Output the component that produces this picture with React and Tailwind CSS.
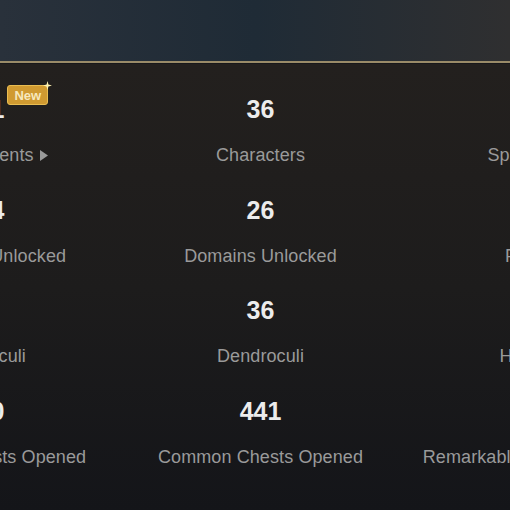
import React from 'react';

const rows = [
  [
    { value: '561', label: 'Achievements', isNew: true, arrow: true },
    { value: '36', label: 'Characters' },
    { value: '12-3', label: 'Spiral Abyss' },
  ],
  [
    { value: '254', label: 'Waypoints Unlocked' },
    { value: '26', label: 'Domains Unlocked' },
    { value: '52', label: 'Pyroculi' },
  ],
  [
    { value: '66', label: 'Anemoculi' },
    { value: '36', label: 'Dendroculi' },
    { value: '48', label: 'Hydroculi' },
  ],
  [
    { value: '120', label: 'Exquisite Chests Opened' },
    { value: '441', label: 'Common Chests Opened' },
    { value: '31', label: 'Remarkable Chests Opened' },
  ],
];

const NewBadge = () => (
  <div className="absolute left-[calc(100%+3px)] -top-[9px]">
    <div className="h-[20px] w-[41px] rounded-[3px] border border-[#e9bd52] bg-[#d09a31] flex items-center justify-center text-[13px] leading-none text-[#f7e8bd]">
      New
    </div>
    <svg className="absolute -right-[4px] -top-[4px]" width="9" height="9" viewBox="0 0 10 10">
      <path d="M5 0 L6 4 L10 5 L6 6 L5 10 L4 6 L0 5 L4 4 Z" fill="#fff3b0" />
    </svg>
  </div>
);

const Stat = ({ value, label, isNew, arrow }) => (
  <div className="w-[277px] shrink-0 flex flex-col items-center">
    <div className="relative h-[30px] text-[25px] leading-[30px] font-bold text-[#ececec]">
      {value}
      {isNew && <NewBadge />}
    </div>
    <div className="mt-[19px] h-[24px] flex items-center gap-[6px] text-[18px] leading-[24px] tracking-[0.1px] text-[#9a9a9a] whitespace-nowrap">
      <span>{label}</span>
      {arrow && (
        <svg width="8" height="11" viewBox="0 0 8 11">
          <path d="M0 0 L8 5.5 L0 11 Z" fill="#9a9a9a" />
        </svg>
      )}
    </div>
  </div>
);

export default function App() {
  return (
    <div className="w-[510px] h-[510px] overflow-hidden flex flex-col font-['Liberation_Sans',Arial,sans-serif]">
      <div className="h-[61px] shrink-0 bg-gradient-to-r from-[#29313b] via-[#1f2b36] to-[#2f2f30]" />
      <div className="h-[2px] shrink-0 bg-[#9a8b68]" />
      <div className="h-[1px] shrink-0 bg-[#18181a]" />
      <div className="flex-1 bg-gradient-to-b from-[#23201e] via-[#1d1c1c] to-[#141519] pt-[30px]">
        <div className="ml-[-155px] flex flex-col gap-[27.7px]">
          {rows.map((row, i) => (
            <div key={i} className="flex">
              {row.map((s) => (
                <Stat key={s.label} {...s} />
              ))}
            </div>
          ))}
        </div>
      </div>
    </div>
  );
}
